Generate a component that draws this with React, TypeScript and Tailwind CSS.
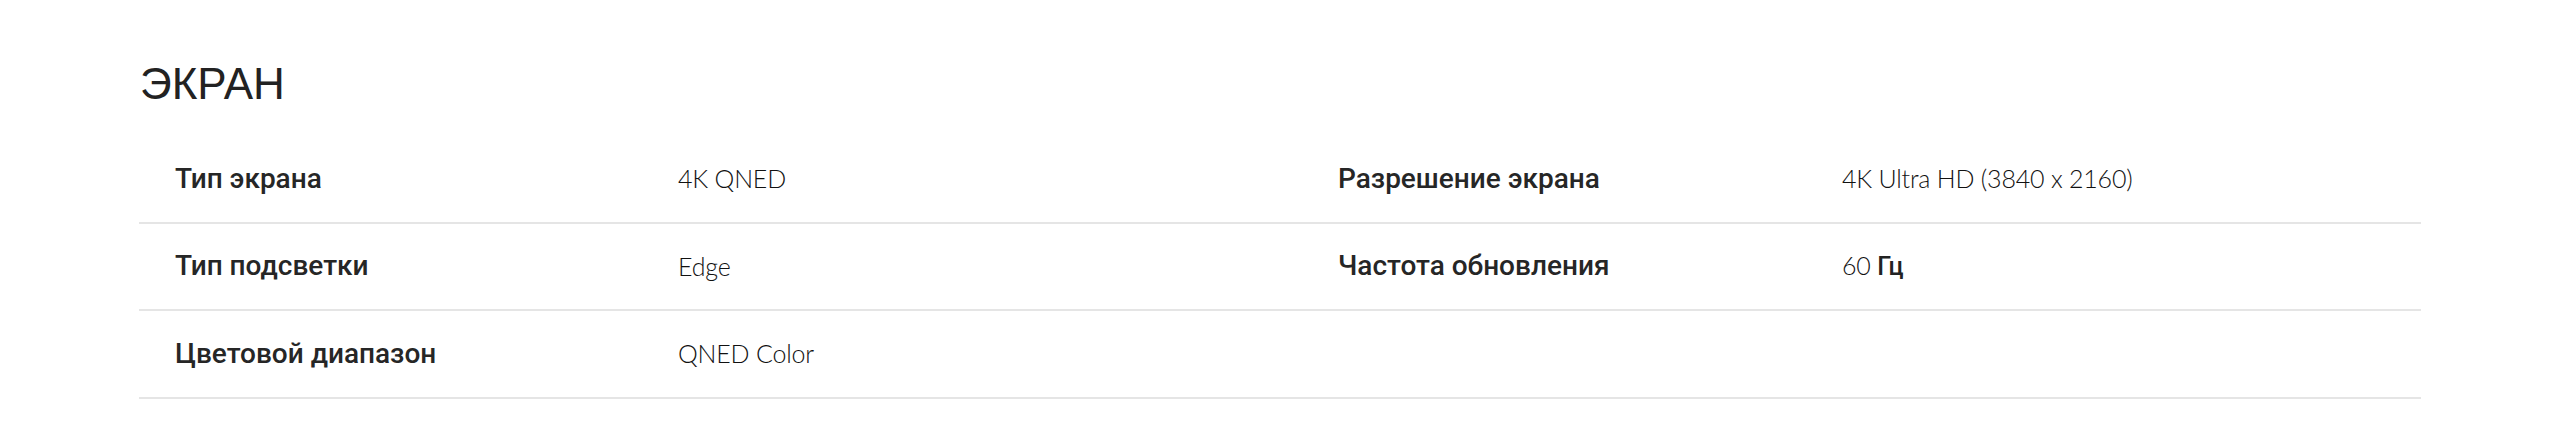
import React from "react";

type Row = { l1: string; v1: React.ReactNode; l2?: string; v2?: React.ReactNode };

const rows: Row[] = [
  { l1: "Тип экрана", v1: "4K QNED", l2: "Разрешение экрана", v2: "4K Ultra HD (3840 x 2160)" },
  {
    l1: "Тип подсветки",
    v1: "Edge",
    l2: "Частота обновления",
    v2: (
      <>
        60{" "}
        <span className="font-['Roboto',sans-serif] font-medium text-[#222]">Гц</span>
      </>
    ),
  },
  { l1: "Цветовой диапазон", v1: "QNED Color" },
];

function Label({ children }: { children?: React.ReactNode }) {
  return (
    <div className="font-['Roboto','Liberation_Sans',sans-serif] font-medium text-[28px] leading-none text-[#262626]">
      {children}
    </div>
  );
}

function Value({ children }: { children?: React.ReactNode }) {
  return (
    <div className="font-['Lato','Noto_Sans',sans-serif] font-light text-[25px] leading-none text-[#111] tracking-[-0.2px]">
      {children}
    </div>
  );
}

export default function App() {
  return (
    <div className="w-[2560px] h-[446px] bg-white px-[139px] pt-[62px]">
      <h2 className="font-['Liberation_Sans',Arial,sans-serif] text-[44px] leading-none text-[#222] mb-[30px] pl-[1px]">
        ЭКРАН
      </h2>
      <div className="flex flex-col">
        {rows.map((r, i) => (
          <div
            key={i}
            className="grid grid-cols-[503px_660px_504px_1fr] items-center h-[87.5px] border-b-2 border-[#e5e5e5] pl-[36px]"
          >
            <Label>{r.l1}</Label>
            <Value>{r.v1}</Value>
            <Label>{r.l2}</Label>
            <Value>{r.v2}</Value>
          </div>
        ))}
      </div>
    </div>
  );
}
